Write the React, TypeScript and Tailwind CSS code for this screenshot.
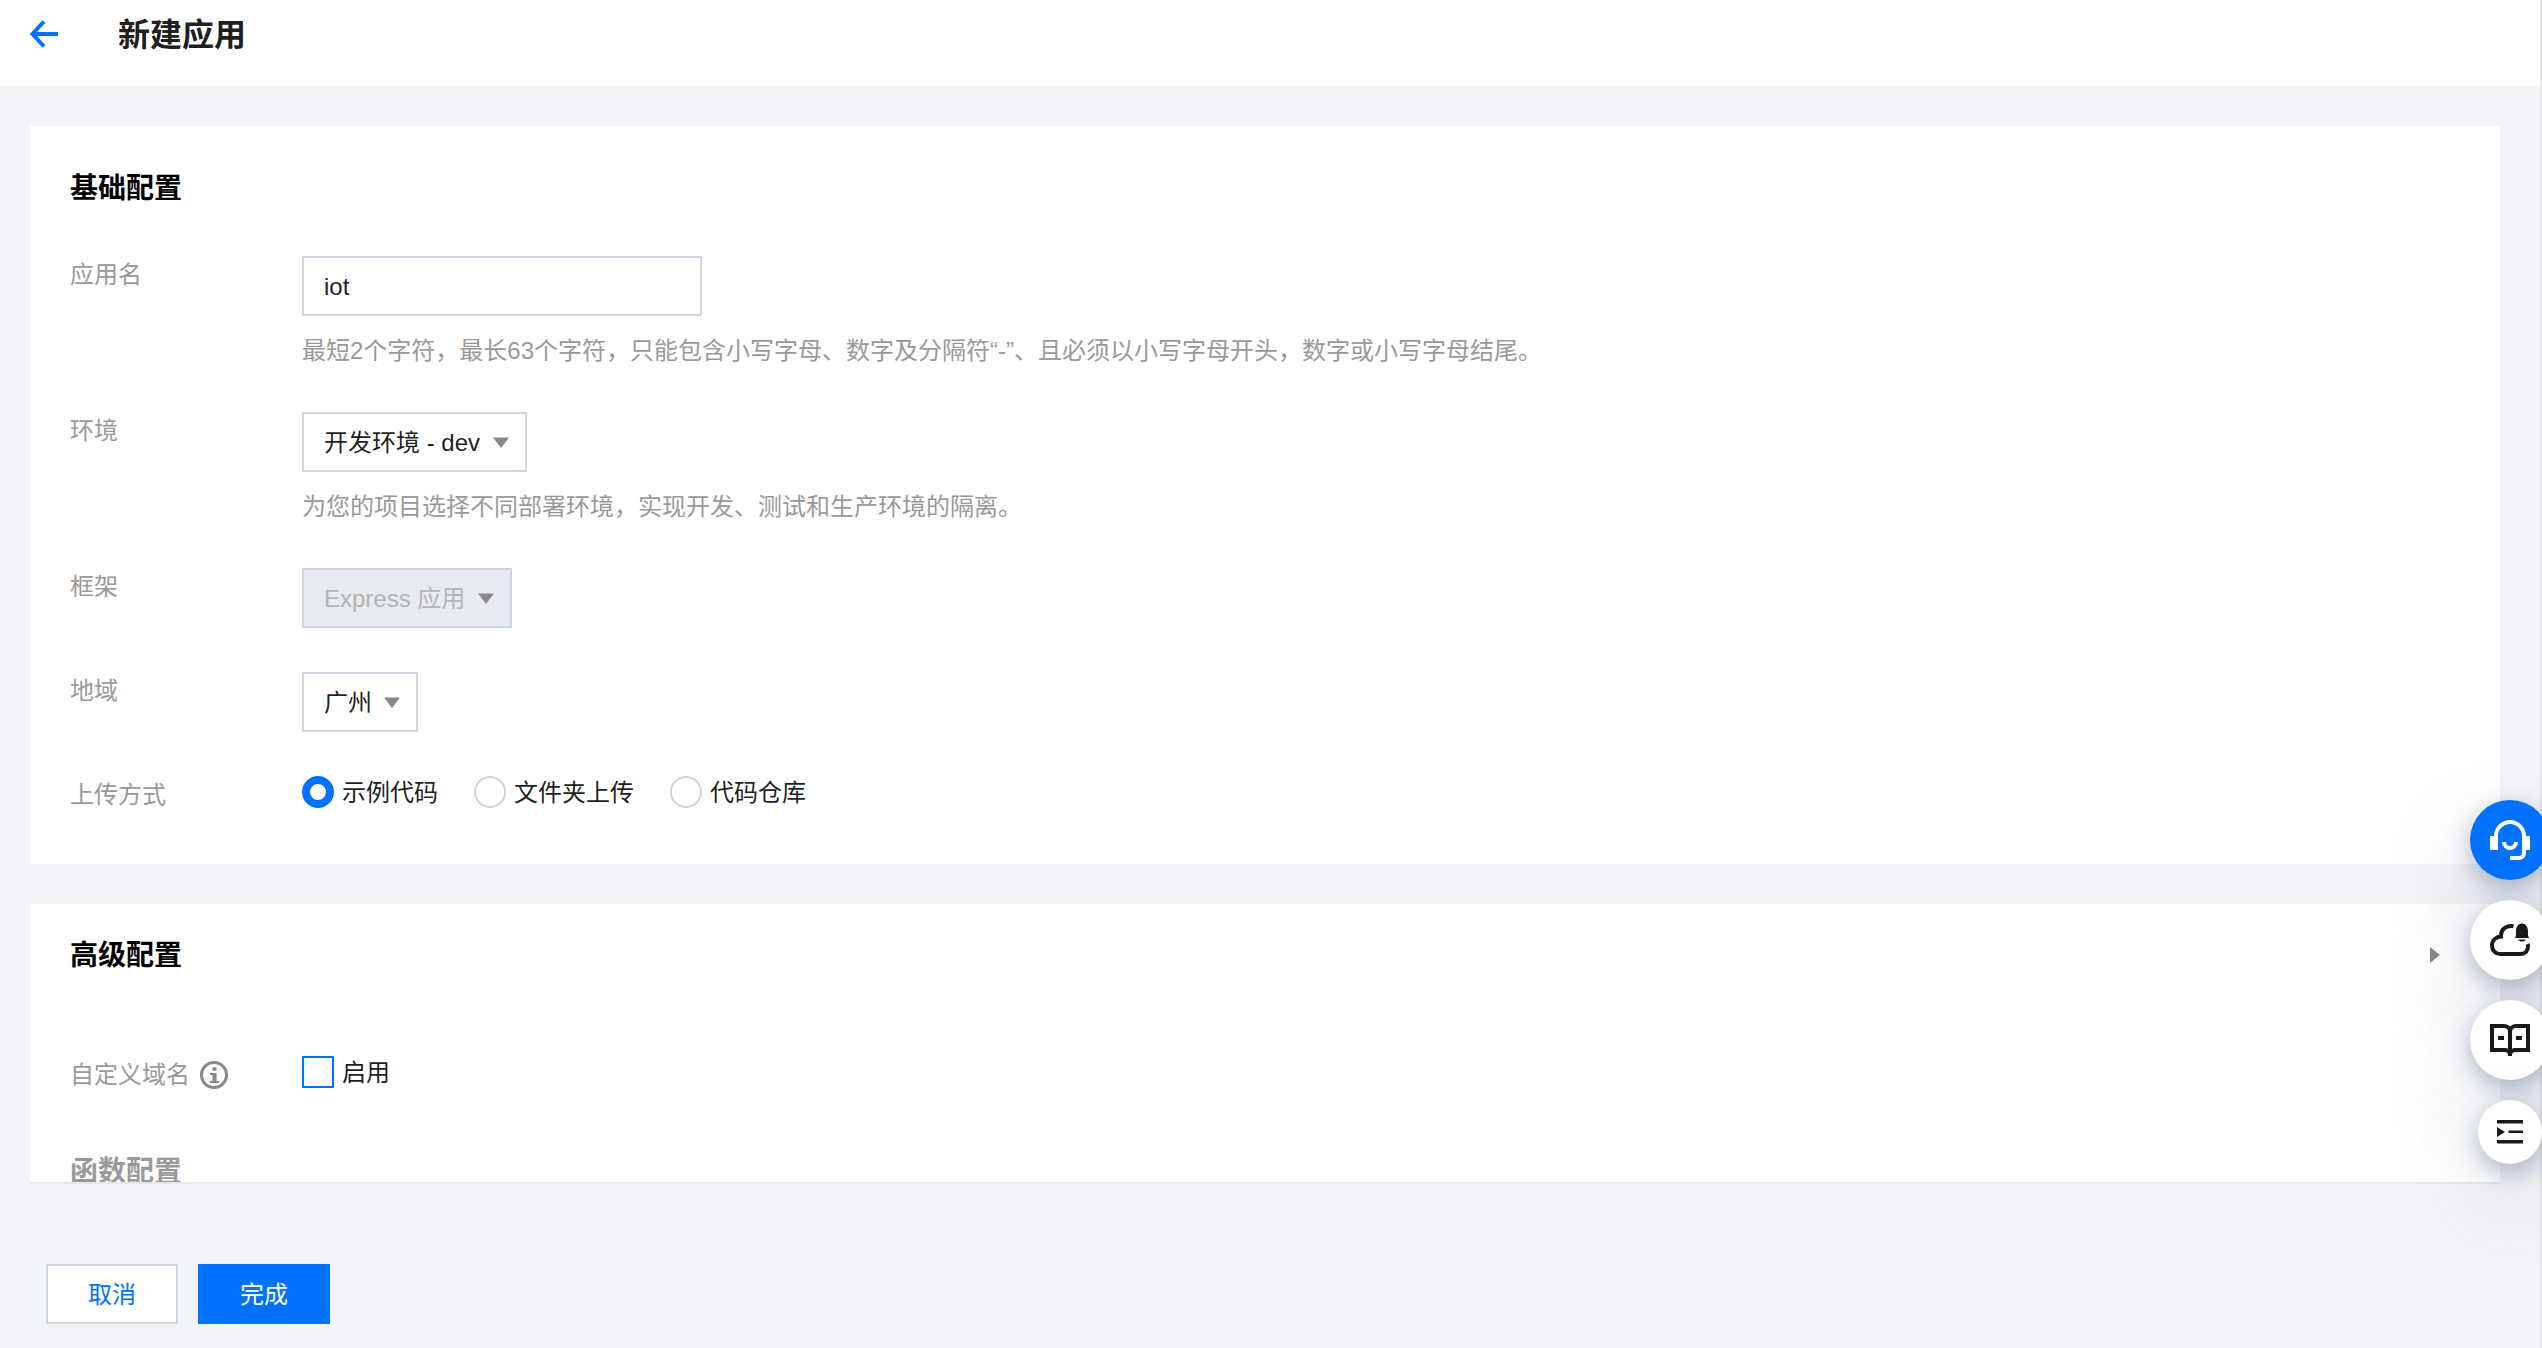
import React, { useState } from 'react';

interface FormRowProps {
  label: React.ReactNode;
  htmlFor?: string;
  children: React.ReactNode;
}

const FormRow: React.FC<FormRowProps> = ({ label, htmlFor, children }) => (
  <div className="flex items-start">
    <label htmlFor={htmlFor} className="w-58 shrink-0 text-[#999999] leading-[38px]">
      {label}
    </label>
    <div className="min-w-0 flex-1">{children}</div>
  </div>
);

interface PickerProps {
  id: string;
  value: string;
  disabled?: boolean;
}

const Picker: React.FC<PickerProps> = ({ id, value, disabled }) => (
  <div className="relative inline-block align-top">
    <select
      id={id}
      disabled={disabled}
      defaultValue={value}
      className="block h-15 appearance-none rounded-none border-2 border-[#cfd5de] bg-white pl-5 pr-11 pt-[2px] text-black/90 outline-none disabled:bg-[#e7eaef] disabled:text-[#b3b3b3] disabled:opacity-100"
    >
      <option value={value}>{value}</option>
    </select>
    <svg className="pointer-events-none absolute right-[18px] top-6 h-3 w-4 fill-[#888888]" viewBox="0 0 16 12">
      <path d="M0 1.500h16L8 12z" />
    </svg>
  </div>
);

interface FloatButtonProps {
  label: string;
  className: string;
  children: React.ReactNode;
}

const FloatButton: React.FC<FloatButtonProps> = ({ label, className, children }) => (
  <button
    type="button"
    aria-label={label}
    className={`flex items-center justify-center rounded-full shadow-[0_8px_24px_rgba(55,75,110,0.36),0_40px_100px_rgba(55,75,110,0.2)] ${className}`}
  >
    {children}
  </button>
);

const uploadModes = ['示例代码', '文件夹上传', '代码仓库'];

const App: React.FC = () => {
  const [name, setName] = useState('iot');
  const [mode, setMode] = useState(uploadModes[0]);
  const [customDomain, setCustomDomain] = useState(false);

  return (
    <div className="flex h-screen flex-col overflow-hidden border-r-2 border-[#e5e5e5] bg-[#f3f4f8] font-['Liberation_Sans','Noto_Sans_CJK_SC',sans-serif] text-2xl text-black/90">
      {/* Header */}
      <header className="flex h-[86px] shrink-0 items-start bg-white pl-[30px] pt-[13px]">
        <button type="button" aria-label="返回" className="mt-[7px] h-7 w-7 text-[#0072ff]">
          <svg className="h-7 w-7" viewBox="0 0 28 28" fill="none" stroke="currentColor" strokeWidth="4">
            <path d="M28 14H3M14 1.500 2.500 14 14 26.500" />
          </svg>
        </button>
        <h1 className="ml-[60px] text-[32px] font-bold leading-11">新建应用</h1>
      </header>

      {/* Scrolling form area */}
      <main className="mr-10 ml-[30px] min-h-0 flex-1 overflow-hidden border-b-2 border-[#e5e8ed] pt-10">
        <section className="bg-white px-10 pb-[50px] pt-[43px]">
          <h2 className="text-[28px] font-bold leading-10 text-black">基础配置</h2>
          <div className="mt-[47px] flex flex-col gap-11">
            <FormRow label="应用名" htmlFor="app-name">
              <input
                id="app-name"
                type="text"
                value={name}
                onChange={e => setName(e.target.value)}
                className="block h-15 w-100 border-2 border-[#cfd5de] px-5 pt-[2px] outline-none"
              />
              <p className="pt-[18px] leading-[34px] text-[#999999]">
                最短2个字符，最长63个字符，只能包含小写字母、数字及分隔符“-”、且必须以小写字母开头，数字或小写字母结尾。
              </p>
            </FormRow>
            <FormRow label="环境" htmlFor="env">
              <Picker id="env" value="开发环境 - dev" />
              <p className="pt-[18px] leading-[34px] text-[#999999]">为您的项目选择不同部署环境，实现开发、测试和生产环境的隔离。</p>
            </FormRow>
            <FormRow label="框架" htmlFor="framework">
              <Picker id="framework" value="Express 应用" disabled />
            </FormRow>
            <FormRow label="地域" htmlFor="region">
              <Picker id="region" value="广州" />
            </FormRow>
            <FormRow label="上传方式">
              <div className="flex gap-9">
                {uploadModes.map(m => (
                  <label key={m} className="flex items-start gap-2 leading-[34px]">
                    <input
                      type="radio"
                      name="upload-mode"
                      checked={mode === m}
                      onChange={() => setMode(m)}
                      className="h-8 w-8 appearance-none rounded-full border-2 border-[#cfd5de] bg-white checked:border-8 checked:border-[#0072ff]"
                    />
                    {m}
                  </label>
                ))}
              </div>
            </FormRow>
          </div>
        </section>

        <section className="mt-10 bg-white px-10 pb-10 pt-[30px]">
          <button type="button" className="flex w-full items-center justify-between pr-5">
            <span className="pt-[2px] text-[28px] font-bold leading-10 text-black">高级配置</span>
            <svg className="h-4 w-[10px] fill-[#888888]" viewBox="0 0 10 16">
              <path d="M0 0v16l10-8z" />
            </svg>
          </button>
          <div className="mt-20">
            <FormRow
              htmlFor="custom-domain"
              label={
                <span className="flex items-center gap-[10px]">
                  自定义域名
                  <svg className="h-7 w-7" viewBox="0 0 28 28" fill="none" stroke="#888888" strokeWidth="3">
                    <circle cx="14" cy="14" r="12.5" />
                    <path d="M12.500 6.200h4v3.600h-4zM10 12h6.500v8H19v2h-9v-2h2.500v-6H10z" fill="#888888" stroke="none" />
                  </svg>
                </span>
              }
            >
              <label className="flex items-start gap-2 leading-[34px]">
                <input
                  id="custom-domain"
                  type="checkbox"
                  checked={customDomain}
                  onChange={e => setCustomDomain(e.target.checked)}
                  className="h-8 w-8 appearance-none border-2 border-[#0072ff] bg-white checked:bg-[#0072ff]"
                />
                启用
              </label>
            </FormRow>
          </div>
          <h3 className="mt-[58px] text-[28px] font-bold leading-10 text-[#999999]">函数配置</h3>
        </section>
      </main>

      {/* Actions */}
      <footer className="flex shrink-0 gap-5 pb-6 pl-[46px] pt-20">
        <button type="button" className="h-15 w-33 border-2 border-[#cfd5de] bg-white pt-[2px] text-[#0072ff]">取消</button>
        <button type="button" className="h-15 w-33 bg-[#0072ff] pt-[2px] text-white">完成</button>
      </footer>

      {/* Floating tools */}
      <aside className="fixed -right-2 top-200 flex flex-col items-center gap-5">
        <FloatButton label="在线客服" className="h-20 w-20 bg-[#0072ff]">
          <svg className="h-10 w-10" viewBox="0 0 40 40" fill="none" stroke="#ffffff" strokeWidth="4">
            <path d="M6 18v-2a14 14 0 0 1 28 0v17a5 5 0 0 1-5 5h-9" />
            <path d="M14 22a6 6 0 0 0 12 0" />
            <path d="M0 16h8v14H0zM32 16h8v14h-8z" fill="#ffffff" stroke="none" />
          </svg>
        </FloatButton>
        <FloatButton label="消息" className="h-20 w-20 bg-white">
          <svg className="h-10 w-10" viewBox="0 0 40 40" fill="none" stroke="#1a1a1a" strokeWidth="4">
            <path d="M23.500 6.200C16 4.800 10.500 9.500 11 16.500 5.500 17 2 20.500 2 25.500 2 30.500 5.500 34 10 34h20c5 0 8-3 8-7.500 0-1.200 0-1.600-.3-2.500" />
            <path d="M24.500 18c1.200-1 1.500-2 1.500-4v-3c0-4 2.500-7.500 6-7.500s6 3.500 6 7.500v3c0 2 .3 3 1.500 4zM28 19.500h8c-1 1.500-2.400 2-4 2s-3-.5-4-2z" fill="#1a1a1a" stroke="none" />
          </svg>
        </FloatButton>
        <FloatButton label="文档" className="h-20 w-20 bg-white">
          <svg className="h-10 w-10" viewBox="0 0 40 40" fill="none" stroke="#1a1a1a" strokeWidth="4">
            <path d="M20 36v-3c-1.500-2-3-3-5-3H2V6h12c3 0 6 2 6 6v22M20 12c0-4 3-6 6-6h12v24H25c-2 0-3.500 1-5 3M8 18h6M26 18h6" />
          </svg>
        </FloatButton>
        <FloatButton label="收起" className="h-16 w-16 bg-white">
          <svg className="h-6 w-[26px]" viewBox="0 0 26 24" fill="#1a1a1a">
            <path d="M0 0h26v3.500H0zM11.500 10.500H26V13H11.500zM0 20h26v3.500H0zM0 7l8 5-8 5z" />
          </svg>
        </FloatButton>
      </aside>
    </div>
  );
};

export default App;
